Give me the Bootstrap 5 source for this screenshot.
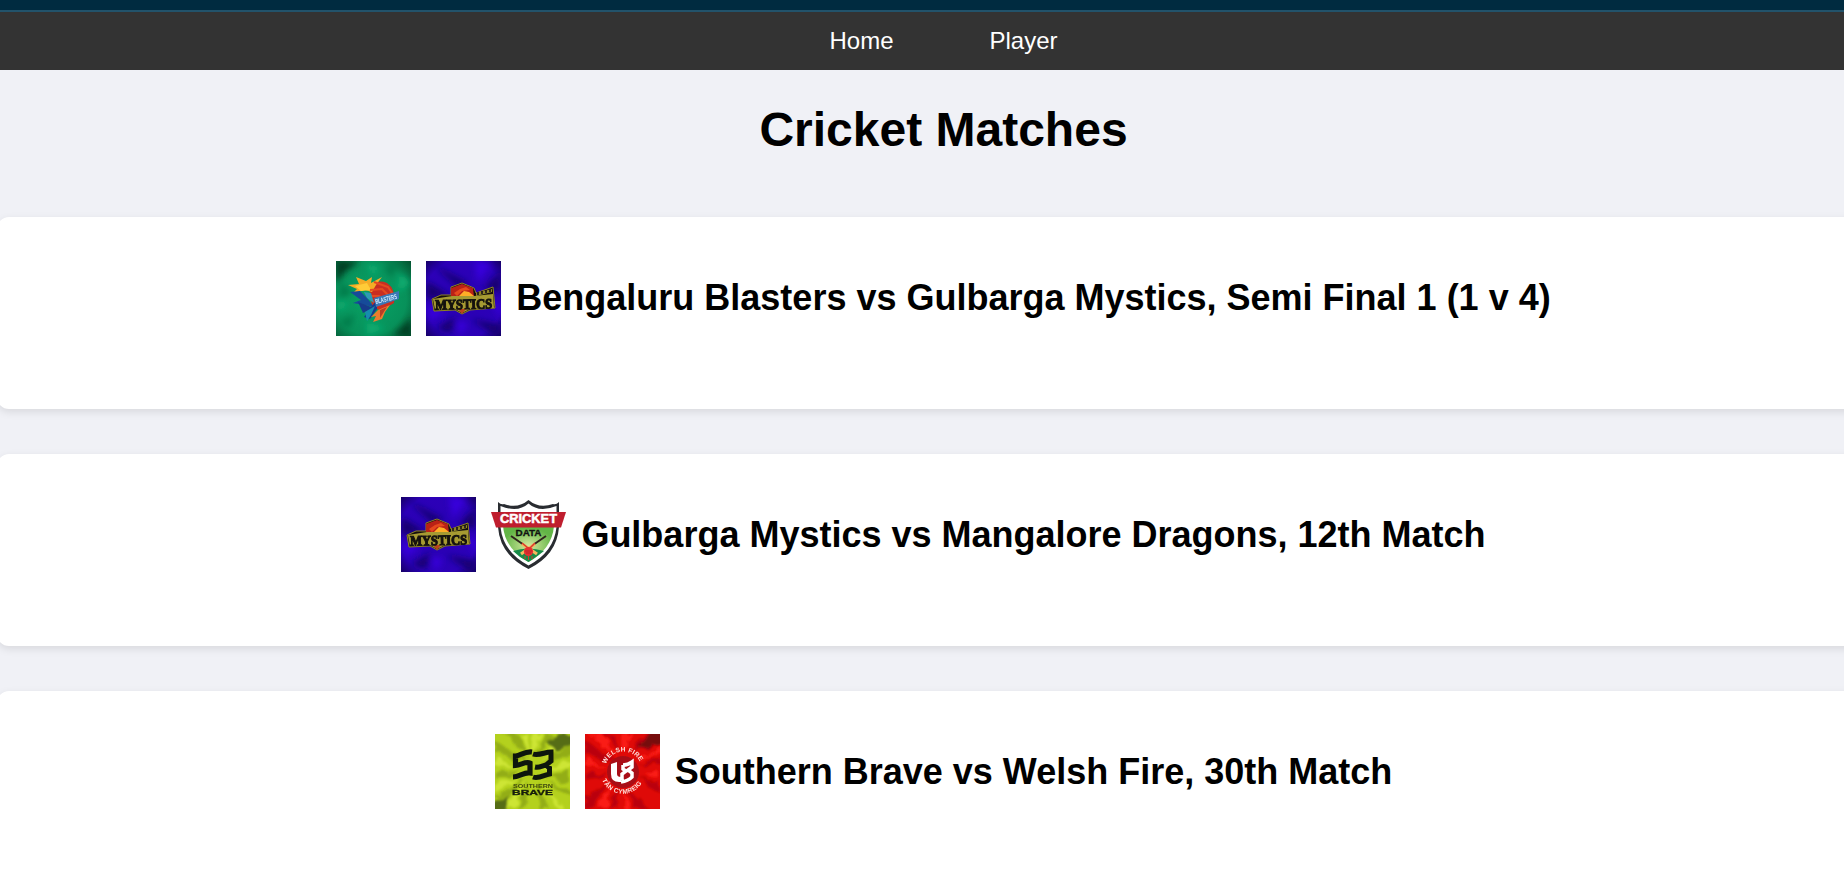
<!DOCTYPE html>
<html lang="en">
<head>
<meta charset="utf-8">
<title>Cricket Matches</title>
<link href="https://cdn.jsdelivr.net/npm/bootstrap@5.3.0/dist/css/bootstrap.min.css" rel="stylesheet">
<style>
html{overflow:hidden}
body{background:#f0f1f6;font-family:"Liberation Sans",Arial,sans-serif;color:#000;overflow:hidden;height:878px}
.page{width:1893px;margin-left:-3px}
.topline{height:12px;background:#002b40;border-bottom:2px solid #22536b}
.mainbar{height:58px;background:#333;gap:96px;font-size:24px;line-height:36px;padding-bottom:1px}
.mainbar a{color:#fff}
h1{font-size:48px;line-height:54px;margin:33px 0 60px}
.match{height:192px;border:0;border-radius:12px;margin-bottom:45px;padding-top:43px;gap:15px;box-shadow:0 3px 8px rgba(0,0,0,.1)}
.match h2{font-size:36px;line-height:75px;height:75px}
.match svg{width:75px;height:75px;flex:none}
.match:first-of-type svg{margin-top:1px}
svg text{font-family:"Liberation Sans",Arial,sans-serif;font-weight:700}
</style>
<script src="https://cdn.jsdelivr.net/npm/bootstrap@5.3.0/dist/js/bootstrap.bundle.min.js"></script>
</head>
<body>
<svg width="0" height="0" class="position-absolute" aria-hidden="true">
<defs>
<filter id="soft" x="-10%" y="-10%" width="120%" height="120%"><feGaussianBlur stdDeviation=".55"/></filter>
<filter id="ray" x="-10%" y="-10%" width="120%" height="120%"><feTurbulence type="fractalNoise" baseFrequency=".09" numOctaves="2" seed="4"/><feDisplacementMap in="SourceGraphic" scale="12" xChannelSelector="R" yChannelSelector="G"/><feGaussianBlur stdDeviation="1"/></filter>
<filter id="haze" x="-30%" y="-30%" width="160%" height="160%"><feGaussianBlur stdDeviation="3"/></filter>
<radialGradient id="gGreen" cx=".45" cy=".5" r=".75"><stop offset="0" stop-color="#08a266"/><stop offset=".65" stop-color="#07915a"/><stop offset="1" stop-color="#04502f"/></radialGradient>
<radialGradient id="gBlue" cx=".5" cy=".5" r=".75"><stop offset="0" stop-color="#2a00b4"/><stop offset=".7" stop-color="#2c00b8"/><stop offset="1" stop-color="#100050"/></radialGradient>
<radialGradient id="gShield" cx=".5" cy=".55" r=".5"><stop offset="0" stop-color="#d5e8a0"/><stop offset="1" stop-color="#62b546"/></radialGradient>
<symbol id="mystics" viewBox="0 0 75 75">
<rect width="75" height="75" fill="url(#gBlue)"/>
<g filter="url(#haze)"><path d="M8 4L42 22L34 28Z M0 20L25 35L0 38Z M75 10L58 27L75 32Z M45 58L75 64L70 75Z M10 68L30 55L25 72Z" fill="#15006f"/><path d="M48 0L66 2L52 22Z M0 45L20 50L5 60Z M65 40L75 43V58Z M30 60L42 62L35 75Z" fill="#3904dc"/></g>
<g filter="url(#soft)">
<path d="M25 26L36 22L48 27L50 32L67 26L69 47L44 49L36 53L29 49L8 50L6 38L15 34L25 34Z" fill="#14100e" stroke="#8e8420" stroke-width="1"/>
<path d="M25 27L36 23L47 27L48 36L25 36Z" fill="#b92018"/>
<path d="M33 35L38 30L43 31L48 35Z" fill="#ffad28"/><path d="M28 32L34 28L40 26L44 29L36 30L31 35Z" fill="#e5481f"/>
<path d="M50 32L66 28V31L50 35Z" fill="#8f8428"/><path d="M52 31V34M56 30V33M60 29V32M64 28V31" stroke="#171018" stroke-width="1.6"/>
<path d="M7 38L26 35L48 35L67 33L68 47L44 48L36 52L29 48L9 49Z" fill="#a69a31"/><path d="M32 48L36 53L40 48Z" fill="#b9421b"/>
<text x="9" y="48" font-size="14" textLength="57" lengthAdjust="spacingAndGlyphs" transform="rotate(-1.2 37 42)" fill="#15120f" style="font-family:'Liberation Serif',serif" stroke="#15120f" stroke-width="1.1">MYSTICS</text></g>
</symbol>
</defs>
</svg>
<div class="page">
<div class="topline"></div>
<nav class="mainbar d-flex justify-content-center align-items-center">
<a href="#" class="text-decoration-none">Home</a>
<a href="#" class="text-decoration-none">Player</a>
</nav>
<main>
<h1 class="text-center fw-bold">Cricket Matches</h1>
<section class="card match flex-row justify-content-center align-items-start">
<svg viewBox="0 0 75 75" role="img" aria-label="Bengaluru Blasters">
<rect width="75" height="75" fill="url(#gGreen)"/>
<g filter="url(#haze)"><path d="M0 0H24L9 11L0 23Z M75 57V75H57Z" fill="#033c22"/><path d="M5 22L17 31L3 38Z M49 5L64 1L54 17Z M3 61L19 53L13 68Z" fill="#057a49"/><path d="M64 12L75 22L61 31Z M2 39L13 43L2 51Z M31 61L50 67L31 74Z M30 3L44 6L37 15Z" fill="#0bae72"/></g>
<g filter="url(#soft)">
<path d="M33 25Q42 18 51 22Q60 28 58 42L45 50L36 45Z" fill="#c92f22"/>
<path d="M12 24L23 23L20 16L30 20L36 16L35 22L46 16L40 24L36 31L29 29L17 32L21 28Z" fill="#f4ad27"/>
<path d="M19 25L31 22L35 29L25 30Z" fill="#ffcc38"/>
<path d="M38 21L52 26L58 35M34 29L46 28L56 38M34 35L43 35L51 40" fill="none" stroke="#e54a20" stroke-width="2"/>
<path d="M14 31L24 30L31 37L38 46L28 44L17 42L25 39Z" fill="#164b99"/>
<path d="M22 41L35 46L41 39L41 48L34 58L28 56L33 49L27 52Z" fill="#183b8c"/>
<path d="M28 31L35 32L38 42L31 37Z" fill="#2e99b5"/><path d="M29 51L39 45L35 54L31 60Z" fill="#168bae"/>
<path d="M42 49L54 44L49 51L46 58L37 61L40 55L35 56Z" fill="#ec7b2e"/><path d="M44 49L51 46L44 57Z" fill="#b83e28"/>
<path d="M38 37L63 30V38L40 46Z" fill="#3a77b6"/>
<text x="40" y="43" font-size="7" textLength="22" lengthAdjust="spacingAndGlyphs" transform="rotate(-14 40 43)" fill="#d3edff">BLASTERS</text></g>
</svg>
<svg role="img" aria-label="Gulbarga Mystics"><use href="#mystics"/></svg>
<h2 class="fw-bold m-0">Bengaluru Blasters vs Gulbarga Mystics, Semi Final 1 (1 v 4)</h2>
</section>
<section class="card match flex-row justify-content-center align-items-start">
<svg role="img" aria-label="Gulbarga Mystics"><use href="#mystics"/></svg>
<svg viewBox="0 0 75 75" role="img" aria-label="Mangalore Dragons">
<path d="M7 5Q10 8 13 7Q27 12 37.500 3Q48 12 62 7Q65 8 68 5V30Q66 58 37.500 72Q9 58 7 30Z" fill="#292c31"/>
<path d="M9.500 9Q27 16 37.500 6.500Q48 16 65.500 9V30Q63 55 37.500 68.500Q12 55 9.500 30Z" fill="#fff"/>
<path d="M12 29H63Q61 52 37.500 65Q14 52 12 29Z" fill="url(#gShield)"/>
<path d="M22 54Q37 49 53 54L45 60L37.500 65L29 60Z" fill="#178b48"/>
<path d="M20 39L33 48M55 39L42 48" stroke="#30251d" stroke-width="2"/>
<path d="M31 47L46 57M44 47L30 57" stroke="#f4b85d" stroke-width="3.200"/><path d="M31 46L37 51M44 46L39 51" stroke="#d73b2c" stroke-width="1.500"/>
<circle cx="37.500" cy="54.500" r="4.600" fill="#e53030"/><path d="M34 54H41M35 56H40" stroke="#a91d25" stroke-width=".7"/>
<path d="M34 59V62M37.500 59V63M41 59V62" stroke="#d33b2b" stroke-width="1"/>
<path d="M0 15H75L70 30.500H5Z" fill="#bf1e2e"/>
<text x="9" y="26.200" font-size="12" textLength="57" lengthAdjust="spacingAndGlyphs" fill="#fff" stroke="#fff" stroke-width=".5">CRICKET</text>
<text x="24.500" y="38.500" font-size="9.500" textLength="26" lengthAdjust="spacingAndGlyphs" fill="#111" stroke="#111" stroke-width=".3">DATA</text>
</svg>
<h2 class="fw-bold m-0">Gulbarga Mystics vs Mangalore Dragons, 12th Match</h2>
</section>
<section class="card match flex-row justify-content-center align-items-start">
<svg viewBox="0 0 75 75" role="img" aria-label="Southern Brave">
<rect width="75" height="75" fill="#b4d11e"/>
<g filter="url(#ray)"><path d="M0 6L34 28L0 18ZM8 0L35 24L21 0ZM51 0L40 24L59 3ZM75 10L42 31L75 21ZM75 38L48 40L75 50ZM0 38L29 37L0 46ZM0 62L32 43L5 75ZM21 75L35 47L31 75ZM46 75L41 46L57 75ZM75 66L47 45L75 58Z" fill="#93ad18"/><path d="M24 0L36 23L33 0ZM39 0L38 25L47 0ZM70 0L42 27L75 7ZM75 29L45 34L75 36ZM0 26L29 34L0 32ZM0 51L30 41L0 58ZM10 75L34 45L18 75ZM64 75L43 44L72 75Z" fill="#cde534"/>
<path d="M52 9L62 0H80V9L60 16ZM-5 69L15 61L8 80H-5Z" fill="#566d16"/></g>
<g filter="url(#soft)">
<path d="M37 18C30 17 25 22 20.500 22V31.500C26 31 31 27 35 29V39C29 38 24 43 18 43" fill="none" stroke="#10150a" stroke-width="5.200"/>
<path d="M38 20C44 22 50 18 56 18V27L51 31L54.500 34V40C49 41 44 45 38 43M40 33C45 34 48 31 52 31" fill="none" stroke="#10150a" stroke-width="5"/>
<text x="18" y="54" font-size="5" textLength="40" lengthAdjust="spacingAndGlyphs" fill="#404b0c">SOUTHERN</text>
<text x="17" y="60.500" font-size="8" textLength="41" lengthAdjust="spacingAndGlyphs" fill="#141b09" stroke="#141b09" stroke-width=".3">BRAVE</text></g>
</svg>
<svg viewBox="0 0 75 75" role="img" aria-label="Welsh Fire">
<rect width="75" height="75" fill="#df0a08"/>
<g filter="url(#ray)"><path d="M0 5L29 27L0 20ZM18 0L35 20L28 0ZM75 0H59L46 18L75 10ZM75 22L52 31L75 32ZM0 39L22 39L0 49ZM0 62L24 48L6 75H0ZM23 75L33 51L32 75ZM75 48L54 43L75 62ZM50 75L45 53L64 75Z" fill="#ba0508"/><path d="M4 0L32 24L16 0ZM38 0L39 23L47 0ZM75 13L51 28L75 19ZM0 26L24 34L0 32ZM11 75L29 49L20 75ZM75 39L53 39L75 45ZM38 75L39 54L47 75Z" fill="#fa1b13"/><path d="M52 14L67 -5H80V9Z" fill="#760a0c"/></g>
<g filter="url(#soft)"><circle cx="38" cy="38" r="16" fill="#a90e15"/>
<path d="M26 30L32 28V40Q32 43 36 43V48Q26 49 26 40Z" fill="#fff"/>
<path d="M38 31Q43 31 47 28V33L43 36L47 39V43Q43 47 36 48M38 31V35L41 37L37 40V46" fill="none" stroke="#fff" stroke-width="3.500"/>
<path id="fireTop" d="M21 30A18.500 18.500 0 0 1 56 30" fill="none"/><path id="fireBottom" d="M17 46A22.500 22.500 0 0 0 58 47" fill="none"/>
<text font-size="6.500" fill="#ffe0db"><textPath href="#fireTop" textLength="43">WELSH FIRE</textPath></text>
<text font-size="6.500" fill="#ffe0db"><textPath href="#fireBottom" textLength="49">TÂN CYMREIG</textPath></text></g>
</svg>
<h2 class="fw-bold m-0">Southern Brave vs Welsh Fire, 30th Match</h2>
</section>
</main>
</div>
</body>
</html>
